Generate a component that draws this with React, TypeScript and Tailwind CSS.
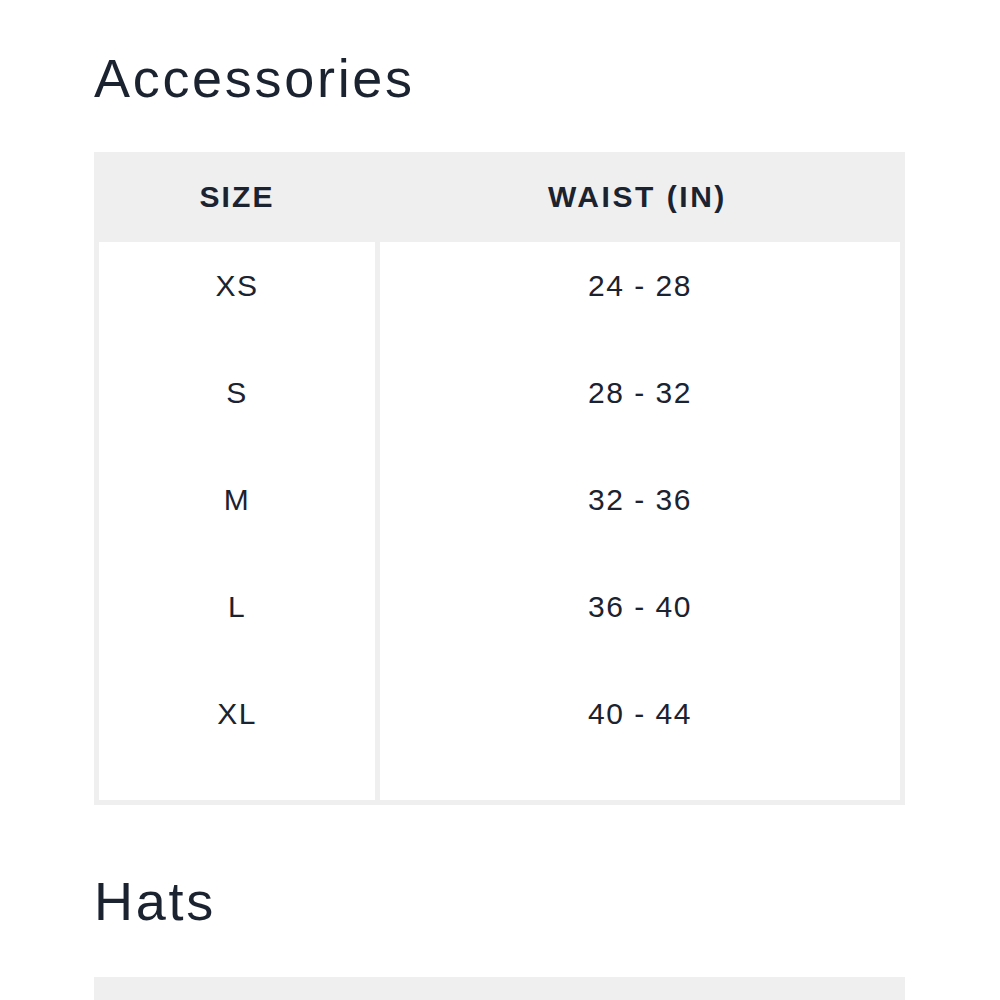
import React from "react";

const rows = [
  ["XS", "24 - 28"],
  ["S", "28 - 32"],
  ["M", "32 - 36"],
  ["L", "36 - 40"],
  ["XL", "40 - 44"],
];

export default function App() {
  return (
    <div
      className="h-[1000px] w-[1000px] overflow-hidden bg-white pl-[94px] pt-[51px] text-[#1b2230]"
      style={{ fontFamily: '"Liberation Sans", Arial, sans-serif' }}
    >
      <h2 className="m-0 text-[54px] leading-[54px] font-normal tracking-[0.05em]">Accessories</h2>
      <div className="mt-[47px] w-[811px] bg-[#efefef]">
        <div className="grid h-[90px] grid-cols-[281px_530px] items-center">
          <div className="pl-[5px] text-center text-[30px] leading-[30px] font-bold tracking-[0.07em]">SIZE</div>
          <div className="pr-[5px] text-center text-[30px] leading-[30px] font-bold tracking-[0.085em]">WAIST (IN)</div>
        </div>
        <div className="grid grid-cols-[276px_520px] gap-x-[5px] px-[5px] pb-[5px]">
          <div className="flex flex-col bg-white pb-[23px]">
            {rows.map((r) => (
              <div key={r[0]} className="h-[107px] pt-[29px] text-center text-[30px] leading-[30px] tracking-[0.05em]">
                {r[0]}
              </div>
            ))}
          </div>
          <div className="flex flex-col bg-white pb-[23px]">
            {rows.map((r) => (
              <div key={r[1]} className="h-[107px] pt-[29px] text-center text-[30px] leading-[30px] tracking-[0.05em]">
                {r[1]}
              </div>
            ))}
          </div>
        </div>
      </div>
      <h2 className="m-0 mt-[69px] text-[54px] leading-[54px] font-normal tracking-[0.05em]">Hats</h2>
      <div className="mt-[49px] h-[90px] w-[811px] bg-[#efefef]" />
    </div>
  );
}
